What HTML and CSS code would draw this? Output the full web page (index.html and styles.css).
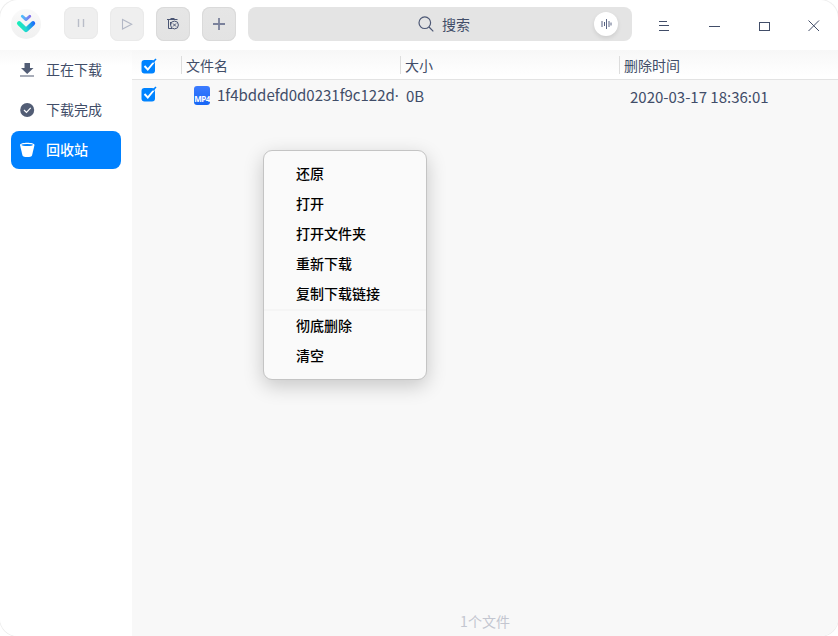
FILE: index.html
```
<!DOCTYPE html>
<html lang="zh-CN">
<head>
<meta charset="utf-8">
<title>下载器</title>
<link rel="stylesheet" href="styles.css">
</head>
<body>
<div class="window">
  <header class="titlebar">
    <div class="logo">
      <svg width="30" height="30" viewBox="0 0 30 30" fill="none" stroke-linecap="round" stroke-linejoin="round">
        <defs>
          <linearGradient id="small" x1="10" y1="0" x2="21" y2="0" gradientUnits="userSpaceOnUse"><stop stop-color="#48c8ff"/><stop offset="1" stop-color="#8b62e8"/></linearGradient>
          <linearGradient id="big" x1="6" y1="18" x2="24" y2="14" gradientUnits="userSpaceOnUse"><stop stop-color="#16f3b4"/><stop offset=".45" stop-color="#22d8cf"/><stop offset="1" stop-color="#1a62ff"/></linearGradient>
        </defs>
        <path d="M11.3 7.2 15 10.6l3.8-3.4" stroke="url(#small)" stroke-width="2.8"/>
        <path d="M8.200 14.300 15 20.900l7-6.600" stroke="url(#big)" stroke-width="4.400"/>
      </svg>
    </div>
    <div class="tools">
      <button class="tool off short"><svg width="34" height="32"><path d="M14.5 12v8M19.5 12v8" stroke="#b9bdc8" stroke-width="1.4"/></svg></button>
      <button class="tool off"><svg width="34" height="34"><path d="M12.5 12.5v9.6l9.2-4.8z" fill="none" stroke="#b3b8c6" stroke-width="1.1"/></svg></button>
      <button class="tool"><svg width="34" height="34" fill="none" stroke="#4a5573"><path d="M11 12.500h10.500M14.500 11.500h4M12.500 13v8.500h3.500"/><circle cx="18.500" cy="18" r="3.900"/><path d="m17 16.500 3 3m0-3-3 3M14.500 15v3"/></svg></button>
      <button class="tool"><svg width="34" height="34"><path d="M11 17h12M17 11v12" stroke="#7a819b" stroke-width="1.8"/></svg></button>
    </div>
    <div class="search">
      <svg class="lens" width="18" height="18" fill="none" stroke="#4d5875" stroke-width="1.2"><circle cx="7.8" cy="7.7" r="5.8"/><path d="m12 12 4.3 4.3"/></svg>
      <span>搜索</span>
      <i class="voice"><svg width="24" height="24" stroke="#5a6584" stroke-width="1"><path d="M8 9v6M10.500 10v4M12.500 7v10M15 9v6M17 10.500v3"/></svg></i>
    </div>
    <div class="controls">
      <svg width="12" height="12" stroke="#414d68" shape-rendering="crispEdges"><path d="M1 1.5h8M1 5.5h10M1 10.5h10"/></svg>
      <svg width="12" height="12" stroke="#414d68" shape-rendering="crispEdges"><path d="M1 6.5h11"/></svg>
      <svg width="12" height="12" stroke="#414d68" fill="none" shape-rendering="crispEdges"><path d="M1.5 2.5h10v8h-10z"/></svg>
      <svg width="12" height="12" stroke="#414d68"><path d="m.5.5 10.500 10.500m0-10.500L.5 11"/></svg>
    </div>
  </header>
  <div class="body">
    <nav class="sidebar">
      <a class="nav"><svg width="16" height="16" fill="#525d75"><path d="M4.500 1h5.500v5h3.500L7.200 12 1 6h3.500zM0 13.500h14v1H0z"/></svg><span>正在下载</span></a>
      <a class="nav"><svg width="16" height="16"><circle cx="7.200" cy="8" r="7" fill="#525d75"/><path d="m4 8 2.500 2.400 4.200-4.500" fill="none" stroke="#fff" stroke-width="1.200"/></svg><span>下载完成</span></a>
      <a class="nav active"><svg width="16" height="16"><path d="M0 3c0-3 14.500-3 14.500 0L12 13.500c-.5 2-9 2-9.500 0z" fill="#fff"/><ellipse cx="7.200" cy="3" rx="5.800" ry=".9" fill="#0083ff"/></svg><span>回收站</span></a>
    </nav>
    <main class="content">
      <div class="row head">
        <div class="check"><svg width="16" height="16"><rect x=".5" y="2" width="13.500" height="13.500" rx="3" fill="#0083ff"/><path d="m3.500 8 3.300 3.500 6.200-7.500" fill="none" stroke="#fff" stroke-width="1.900"/><path d="m11.500 4.500 3.500-3.500" stroke="#0083ff" stroke-width="1.600"/></svg></div>
        <div class="cell name"><span>文件名</span></div>
        <div class="cell size"><span>大小</span></div>
        <div class="cell time"><span>删除时间</span></div>
      </div>
      <div class="row item">
        <div class="check"><svg width="16" height="16"><rect x=".5" y="2" width="13.500" height="13.500" rx="3" fill="#0083ff"/><path d="m3.500 8 3.300 3.500 6.200-7.500" fill="none" stroke="#fff" stroke-width="1.900"/><path d="m11.500 4.500 3.500-3.500" stroke="#0083ff" stroke-width="1.600"/></svg></div>
        <div class="file"><span class="mp4">MP4</span><span class="title">1f4bddefd0d0231f9c122d<span class="dot">·</span></span></div>
        <div class="bytes">0B</div>
        <div class="date">2020-03-17 18:36:01</div>
      </div>
      <footer class="status">1个文件</footer>
    </main>
  </div>
  <div class="menu">
    <div class="entry">还原</div>
    <div class="entry">打开</div>
    <div class="entry">打开文件夹</div>
    <div class="entry">重新下载</div>
    <div class="entry">复制下载链接</div>
    <hr class="rule">
    <div class="entry">彻底删除</div>
    <div class="entry">清空</div>
  </div>
</div>
</body>
</html>
```
FILE: styles.css
```
* { box-sizing: border-box; }
body {
  margin: 0;
  background: #fff;
  font: 14px/20px "Noto Sans CJK SC", sans-serif;
  color: #414d68;
}
svg { display: block; flex: none; }
.window {
  position: relative;
  width: 838px;
  height: 636px;
  overflow: hidden;
  display: flex;
  flex-direction: column;
  border-radius: 18px;
  box-shadow: 0 0 0 1px #eee;
  background: #fff;
}
.titlebar { height: 50px; flex: none; display: flex; align-items: flex-start; padding-left: 11px; }
.logo {
  width: 30px;
  height: 30px;
  margin-top: 9px;
  border-radius: 50%;
  background: linear-gradient(#fafafa, #f0f0f0);
}
.tools { display: flex; gap: 12px; margin: 7px 0 0 23px; }
.tool {
  width: 34px;
  height: 34px;
  padding: 0;
  border: 0;
  border-radius: 8px;
  background: linear-gradient(#e6e6e6, #e3e3e3);
  box-shadow: inset 0 0 0 1px #dadada;
}
.tool.off { background: #efefef; box-shadow: inset 0 0 0 1px #eaeaea; }
.tool.short { height: 32px; }
.search {
  display: flex;
  align-items: center;
  width: 384px;
  height: 34px;
  margin: 7px 0 0 12px;
  padding: 0 14px 0 169px;
  border-radius: 8px;
  background: #e4e4e4;
}
.lens { margin-right: 7px; }
.voice {
  width: 24px;
  height: 24px;
  margin-left: auto;
  border-radius: 50%;
  background: #fff;
  box-shadow: 0 2px 4px #0000001a;
}
.controls { display: flex; gap: 38px; margin: 20px 0 0 26px; }
.body { flex: 1; display: flex; }
.sidebar {
  width: 132px;
  padding: 1px 11px 0;
  background: linear-gradient(#f8f8f8, #fff 16px);
}
.nav {
  display: flex;
  align-items: center;
  gap: 10px;
  height: 38px;
  margin-bottom: 2px;
  padding-left: 9px;
  border-radius: 8px;
}
.nav span { margin-top: -2px; }
.nav.active { background: #0081ff; color: #fff; font-weight: 500; }
.content { flex: 1; display: flex; flex-direction: column; background: #f8f8f8; }
.row { display: flex; }
.check { width: 49px; padding-left: 9px; }
.head {
  height: 30px;
  padding-top: 6px;
  border-bottom: 1px solid #e3e3e3;
  background: linear-gradient(#f7f7f7, #fff 26px);
}
.head .check { padding-top: 2px; }
.cell { height: 18px; padding-left: 4px; border-left: 1px solid #ddd; line-height: 18px; }
.name, .size { width: 219px; }
.item { height: 36px; font-size: 15px; padding-top: 5px; }
.item .check { padding-top: 1px; }
.file { display: flex; width: 225px; padding-left: 13px; }
.title { margin-left: 7px; width: 183px; overflow: hidden; white-space: nowrap; }
.dot { font-family: "Noto Sans", sans-serif; }
.mp4 {
  width: 16px;
  height: 19px;
  margin-top: 1px;
  border-radius: 3px;
  background: linear-gradient(#3c7bff, #1767f5);
  color: #fff;
  font: bold 8px/26px "Noto Sans", sans-serif;
  letter-spacing: -0.6px;
  text-align: center;
}
.bytes { width: 224px; padding-top: 1px; }
.date { padding-top: 2px; }
.status { margin: auto 0 5px; text-align: center; color: #c3c6d0; }
.menu {
  position: absolute;
  left: 263px;
  top: 150px;
  width: 164px;
  height: 230px;
  padding: 8px 0;
  border: 1px solid #c4c4c4;
  border-radius: 9px;
  background: #fafafa;
  box-shadow: 0 6px 20px #00000033;
  color: #000;
  font-weight: 500;
}
.entry { height: 30px; padding-left: 32px; line-height: 28px; }
.rule { height: 2px; margin: 0; border: 0; background: #f5f5f5; }
```
